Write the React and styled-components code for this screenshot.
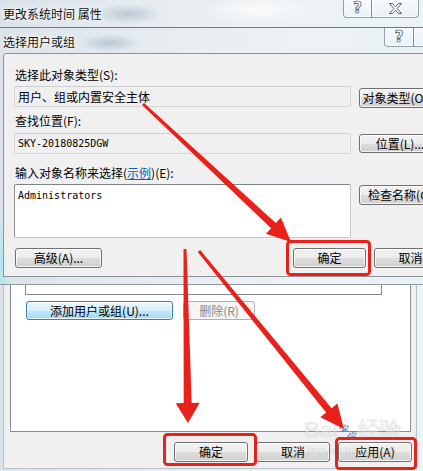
import React from 'react';
import styled, { createGlobalStyle, css } from 'styled-components';

const Global = createGlobalStyle`
  html, body { margin: 0; padding: 0; background: #fff; }
  body { font-family: "Noto Sans CJK SC", "Noto Sans", sans-serif; font-size: 12px; color: #000; }
`;

const glass = css`
  background:
    radial-gradient(ellipse 34px 10px at 128px 14px, rgba(110, 138, 166, 0.35), transparent),
    radial-gradient(ellipse 60px 14px at 260px 10px, rgba(255, 255, 255, 0.7), transparent),
    linear-gradient(90deg, #dbe3ea 0%, #e4eaef 30%, #edf1f4 60%, #eaf3f6 100%);
`;

const Screen = styled.div`
  position: relative;
  width: 423px;
  height: 471px;
  overflow: hidden;
  background: #e4ecf1;
`;

const BackWindow = styled.div`
  display: flex;
  flex-direction: column;
  height: 100%;
  ${glass};
`;

const TitleBar = styled.div`
  display: flex;
  justify-content: space-between;
  align-items: flex-start;
  height: ${(p) => p.$h}px;
  flex: none;
`;

const Title = styled.span`
  padding-left: 3px;
  line-height: ${(p) => p.$lh}px;
  font-size: 12px;
  color: #111;
  text-shadow: 0 0 6px #fff, 0 0 3px #fff;
  white-space: nowrap;
`;

const Captions = styled.div`
  display: flex;
  margin-right: ${(p) => p.$mr}px;
`;

const CaptionButton = styled.div`
  box-sizing: border-box;
  width: ${(p) => p.$w}px;
  height: ${(p) => p.$h}px;
  display: flex;
  align-items: center;
  justify-content: center;
  border: 1px solid rgba(70, 88, 106, 0.55);
  border-top: none;
  margin-left: -1px;
  background: linear-gradient(rgba(255, 255, 255, 0.55), rgba(235, 242, 246, 0.35));
  box-shadow: inset 0 0 0 1px rgba(255, 255, 255, 0.6);
  &:first-child { border-bottom-left-radius: 4px; }
  &:last-child { border-bottom-right-radius: 4px; }
`;

const HelpGlyph = styled.span`
  font-family: "DejaVu Sans", sans-serif;
  font-weight: bold;
  font-size: 15px;
  line-height: 15px;
  color: #fff;
  -webkit-text-stroke: 0.7px #46515c;
`;

const BackClient = styled.div`
  flex: 1;
  display: flex;
  flex-direction: column;
  margin: 0 6px 2px 3px;
  background: #f0f0f0;
  border-left: 1px solid #b9c2c9;
  border-right: 1px solid #b9c2c9;
  border-bottom: 1px solid #b9c2c9;
`;

const TabPanel = styled.div`
  flex: 1;
  margin: 6px 5px 0 6px;
  background: #fff;
  border: 1px solid #898c95;
  display: flex;
  flex-direction: column;
`;

const ListBox = styled.div`
  box-sizing: border-box;
  margin: 26px 0 0 14px;
  width: 357px;
  height: 235px;
  border: 1px solid #828790;
  background: #fff;
`;

const ActionRow = styled.div`
  display: flex;
  gap: 10px;
  margin: 6px 0 0 15px;
`;

const ButtonRow = styled.div`
  display: flex;
  justify-content: ${(p) => p.$justify || 'flex-start'};
  gap: 8px;
  margin: ${(p) => p.$m};
`;

const Button = styled.div`
  box-sizing: border-box;
  flex: none;
  width: ${(p) => p.$w}px;
  height: ${(p) => p.$h || 20}px;
  margin-top: ${(p) => p.$mt || 0}px;
  margin-right: ${(p) => p.$mr || 0}px;
  border: 1px solid #707070;
  border-radius: 3px;
  background: linear-gradient(#f2f2f2 0%, #ebebeb 50%, #dddddd 51%, #cfcfcf 100%);
  box-shadow: inset 0 0 0 1px rgba(255, 255, 255, 0.75);
  display: flex;
  align-items: center;
  justify-content: center;
  overflow: hidden;
  font-size: 12px;
  line-height: 14px;
  color: #000;
  white-space: nowrap;
  ${(p) =>
    p.$variant === 'hot' &&
    css`
      border-color: #3c7fb1;
      background: linear-gradient(#eaf6fd 0%, #d9f0fc 50%, #bee6fd 51%, #a7d9f5 100%);
    `}
  ${(p) =>
    p.$variant === 'disabled' &&
    css`
      border-color: #adb2b5;
      background: #f4f4f4;
      box-shadow: none;
      color: #8a8a8a;
    `}
`;

const FrontDialog = styled.div`
  position: absolute;
  top: 27px;
  left: 0;
  box-sizing: border-box;
  width: 466px;
  height: 258px;
  display: flex;
  flex-direction: column;
  border-top: 1px solid #6f7c88;
  border-bottom: 1px solid #8d99a3;
  background:
    radial-gradient(ellipse 30px 9px at 110px 15px, rgba(110, 138, 166, 0.35), transparent),
    radial-gradient(ellipse 10px 60px at 2px 240px, rgba(150, 230, 240, 0.6), transparent),
    linear-gradient(90deg, #dce4ea 0%, #e6ecf0 35%, #eef2f5 65%, #e6f1f4 100%);
`;

const DialogClient = styled.div`
  flex: 1;
  display: flex;
  flex-direction: column;
  margin: 0 6px 7px 3px;
  padding: 14px 0 0 10px;
  background: #f0f0f0;
  border: 1px solid #8e9297;
  border-radius: 3px 3px 0 0;
`;

const Label = styled.div`
  margin: ${(p) => p.$mt}px 0 0 1px;
  height: 14px;
  line-height: 14px;
  font-size: 12px;
  color: #000;
  white-space: nowrap;
`;

const Link = styled.span`
  color: #0a5ec8;
  text-decoration: underline;
`;

const FieldRow = styled.div`
  display: flex;
  align-items: flex-start;
  gap: 8px;
  margin-top: ${(p) => p.$mt}px;
`;

const TextBox = styled.div`
  box-sizing: border-box;
  flex: none;
  width: 337px;
  height: ${(p) => p.$h}px;
  padding: ${(p) => (p.$multi ? '4px 3px' : '0 3px')};
  display: flex;
  align-items: ${(p) => (p.$multi ? 'flex-start' : 'center')};
  background: ${(p) => (p.$multi ? '#fff' : '#f0f0f0')};
  border: 1px solid ${(p) => (p.$multi ? '#c4c8cc' : '#d3d5d8')};
  border-top-color: ${(p) => (p.$multi ? '#7f848a' : '#cdd0d3')};
  border-left-color: ${(p) => (p.$multi ? '#8d9197' : '#d3d5d8')};
  border-radius: 2px;
  font-size: 12px;
  line-height: 14px;
  white-space: nowrap;
`;

const Mono = styled.span`
  font-family: "DejaVu Sans Mono", monospace;
  font-size: 10px;
`;

const Overlay = styled.svg`
  position: absolute;
  left: 0;
  top: 0;
  pointer-events: none;
`;

const Watermark = styled.div`
  position: absolute;
  left: 304px;
  top: 418px;
  display: flex;
  flex-direction: column;
  align-items: flex-start;
  pointer-events: none;
  color: rgba(255, 255, 255, 0.45);
  text-shadow: 0 0 1px rgba(140, 140, 140, 0.3);
`;

const WmBig = styled.span`
  font-family: "Liberation Sans", sans-serif;
  font-weight: bold;
  font-size: 22px;
  line-height: 24px;
`;

const WmSmall = styled.span`
  font-family: "Liberation Sans", sans-serif;
  font-size: 11px;
  line-height: 12px;
  margin-left: 3px;
  color: rgba(150, 150, 150, 0.22);
  text-shadow: none;
`;

function arrow(x1, y1, x2, y2, w1, w2, headLen, headW) {
  const dx = x2 - x1;
  const dy = y2 - y1;
  const len = Math.hypot(dx, dy);
  const ux = dx / len;
  const uy = dy / len;
  const nx = -uy;
  const ny = ux;
  const bx = x2 - ux * headLen;
  const by = y2 - uy * headLen;
  const pts = [
    [x1 + nx * w1 / 2, y1 + ny * w1 / 2],
    [bx + nx * w2 / 2, by + ny * w2 / 2],
    [bx + nx * headW / 2, by + ny * headW / 2],
    [x2, y2],
    [bx - nx * headW / 2, by - ny * headW / 2],
    [bx - nx * w2 / 2, by - ny * w2 / 2],
    [x1 - nx * w1 / 2, y1 - ny * w1 / 2],
  ];
  return pts.map((p) => p.map((v) => v.toFixed(1)).join(',')).join(' ');
}

const RED = '#e8211b';

const CloseIcon = () => (
  <svg width="15" height="11" viewBox="0 0 15 11">
    <polygon
      points="1.5,0.5 4.5,0.5 7.5,3.8 10.5,0.5 13.5,0.5 9.2,5.5 13.5,10.5 10.5,10.5 7.5,7.2 4.5,10.5 1.5,10.5 5.8,5.5"
      fill="#fff"
      stroke="#46515c"
      strokeWidth="0.9"
      strokeLinejoin="round"
    />
  </svg>
);

export default function App() {
  return (
    <Screen>
      <Global />
      <BackWindow>
        <TitleBar $h={27}>
          <Title $lh={28}>更改系统时间 属性</Title>
          <Captions $mr={4}>
            <CaptionButton $w={29} $h={18}>
              <HelpGlyph>?</HelpGlyph>
            </CaptionButton>
            <CaptionButton $w={48} $h={18}>
              <CloseIcon />
            </CaptionButton>
          </Captions>
        </TitleBar>
        <BackClient>
          <TabPanel>
            <ListBox />
            <ActionRow>
              <Button $w={147} $h={19} $variant="hot">添加用户或组(U)...</Button>
              <Button $w={72} $h={19} $variant="disabled">删除(R)</Button>
            </ActionRow>
          </TabPanel>
          <ButtonRow $justify="flex-end" $m="10px 4px 6px 0">
            <Button $w={74} $h={20}>确定</Button>
            <Button $w={74} $h={20}>取消</Button>
            <Button $w={74} $h={20}>应用(A)</Button>
          </ButtonRow>
        </BackClient>
      </BackWindow>

      <FrontDialog>
        <TitleBar $h={25}>
          <Title $lh={28}>选择用户或组</Title>
          <Captions $mr={5}>
            <CaptionButton $w={30} $h={19}>
              <HelpGlyph>?</HelpGlyph>
            </CaptionButton>
            <CaptionButton $w={48} $h={19}>
              <CloseIcon />
            </CaptionButton>
          </Captions>
        </TitleBar>
        <DialogClient>
          <Label $mt={0}>选择此对象类型(S):</Label>
          <FieldRow $mt={4}>
            <TextBox $h={21}>用户、组或内置安全主体</TextBox>
            <Button $w={82} $mt={2}>对象类型(O)...</Button>
          </FieldRow>
          <Label $mt={6}>查找位置(F):</Label>
          <FieldRow $mt={5}>
            <TextBox $h={21}><Mono>SKY-20180825DGW</Mono></TextBox>
            <Button $w={82} $h={19} $mt={1}>位置(L)...</Button>
          </FieldRow>
          <Label $mt={12}>输入对象名称来选择(<Link>示例</Link>)(E):</Label>
          <FieldRow $mt={4}>
            <TextBox $h={54} $multi><Mono>Administrators</Mono></TextBox>
            <Button $w={82} $mt={1}>检查名称(C)</Button>
          </FieldRow>
          <ButtonRow $m="10px 0 0 1px">
            <Button $w={87} $mr={183}>高级(A)...</Button>
            <Button $w={73}>确定</Button>
            <Button $w={73}>取消</Button>
          </ButtonRow>
        </DialogClient>
      </FrontDialog>

      <Watermark>
        <WmBig>Bai<span style={{ fontSize: 16 }}>🐾</span>经验</WmBig>
        <WmSmall>jingyan.baidu.com</WmSmall>
      </Watermark>

      <Overlay width="423" height="471" viewBox="0 0 423 471">
        <rect x="287.5" y="241.5" width="82" height="33" rx="3" fill="none" stroke={RED} strokeWidth="3" />
        <rect x="164.5" y="434.5" width="91" height="30" rx="3" fill="none" stroke={RED} strokeWidth="3" />
        <rect x="336.5" y="438.5" width="79" height="30" rx="3" fill="none" stroke={RED} strokeWidth="3" />
        <polygon points={arrow(143, 104, 291, 242, 3, 7, 24, 22)} fill={RED} />
        <polygon points={arrow(185, 249, 188, 423, 3, 8, 20, 24)} fill={RED} />
        <polygon points={arrow(199, 251, 344, 429, 3, 7, 24, 22)} fill={RED} />
      </Overlay>
    </Screen>
  );
}
